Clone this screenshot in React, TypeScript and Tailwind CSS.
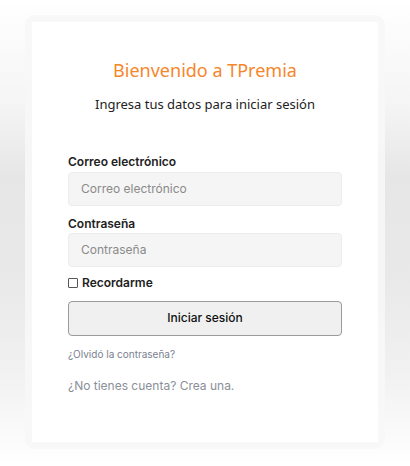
export default function App() {
  return (
    <div className="flex h-[466px] w-[410px] justify-center overflow-hidden bg-[linear-gradient(180deg,#ffffff_0%,#f5f5f5_22%,#e6e6e6_38%,#e9e9e9_60%,#f1f1f1_80%,#ffffff_100%)] pt-[15px] font-['Inter',sans-serif]">
      <div className="h-[434px] w-[360px] rounded-[10px] bg-[#f7f7f7]/90 p-[7px]">
        <div className="flex h-full flex-col bg-white px-9">
          <h1 className="mt-[36px] text-center font-['Noto_Sans',sans-serif] text-[18px] font-normal leading-6 text-[#f7862b]">
            Bienvenido a TPremia
          </h1>
          <p className="mt-[13px] text-center font-['Noto_Sans',sans-serif] text-[13px] text-[#222]">
            Ingresa tus datos para iniciar sesión
          </p>

          <form className="mt-[39px] flex flex-col">
            <label className="text-[12px] font-semibold leading-4 text-[#222]">Correo electrónico</label>
            <input
              type="email"
              placeholder="Correo electrónico"
              className="mt-[2px] h-[34px] rounded-[4px] border border-[#ececec] bg-[#f5f5f5] px-3 text-[12px] text-[#333] placeholder:text-[#8a8a8a] outline-none"
            />

            <label className="mt-[10px] text-[12px] font-semibold leading-4 text-[#222]">Contraseña</label>
            <input
              type="password"
              placeholder="Contraseña"
              className="mt-[1px] h-[34px] rounded-[4px] border border-[#ececec] bg-[#f5f5f5] px-3 text-[12px] text-[#333] placeholder:text-[#8a8a8a] outline-none"
            />

            <label className="mt-[8px] flex items-center gap-[4px] text-[12px] font-semibold leading-4 text-[#222]">
              <span className="h-[10px] w-[10px] rounded-[1px] border border-[#555] bg-white" />
              Recordarme
            </label>

            <button
              type="button"
              className="mt-[10px] h-[35px] rounded-[4px] border border-[#9a9a9a] bg-[#f0f0f0] text-[12px] font-medium text-[#111]"
            >
              Iniciar sesión
            </button>

            <a className="mt-[10px] text-[10px] leading-4 text-[#7a8190]">¿Olvidó la contraseña?</a>
            <a className="mt-[16px] text-[12px] leading-4 text-[#8a8f99]">¿No tienes cuenta? Crea una.</a>
          </form>
        </div>
      </div>
    </div>
  );
}
